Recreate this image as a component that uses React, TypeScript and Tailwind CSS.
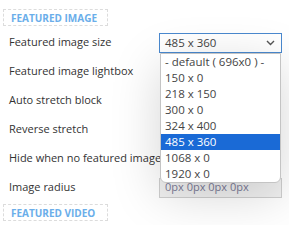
import React from "react";

const options = [
  "- default ( 696x0 ) -",
  "150 x 0",
  "218 x 150",
  "300 x 0",
  "324 x 400",
  "485 x 360",
  "1068 x 0",
  "1920 x 0",
];

const labels = [
  "Featured image size",
  "Featured image lightbox",
  "Auto stretch block",
  "Reverse stretch",
  "Hide when no featured image",
  "Image radius",
];

function Header({ text }: { text: string }) {
  return (
    <div className="ml-[3px] w-[105px] h-[17px] border border-dashed border-[#dcdcdc] flex items-center pl-[7px]">
      <span className="text-[10px] font-bold text-[#6aaeea] leading-none">{text}</span>
    </div>
  );
}

export default function App() {
  return (
    <div
      className="relative w-[289px] h-[225px] overflow-hidden bg-white"
      style={{ fontFamily: '"Open Sans", "Liberation Sans", sans-serif' }}
    >
      <div className="pt-[9px] flex flex-col">
        <Header text="FEATURED IMAGE" />
        <div className="flex flex-col mt-[2px]">
          {labels.map((l, i) => (
            <div key={l} className="h-[29px] flex items-center pl-[9px]">
              <span className="w-[150px] text-[11px] text-[#333] whitespace-nowrap">{l}</span>
              {i === 0 && (
                <div className="w-[123px] h-[20px] border border-[#4a89cf] bg-white flex items-center justify-between pl-[5px] pr-[6px]">
                  <span className="text-[11.5px] text-[#444]">485 x 360</span>
                  <svg width="9" height="6" viewBox="0 0 9 6">
                    <path d="M1 1 L4.5 4.5 L8 1" fill="none" stroke="#555" strokeWidth="1.4" />
                  </svg>
                </div>
              )}
              {i === 5 && (
                <div className="w-[123px] h-[20px] border border-[#cfcfcf] bg-[#f1f1f1] flex items-center pl-[5px]">
                  <span className="text-[11px] text-[#7c7c98]">0px 0px 0px 0px</span>
                </div>
              )}
            </div>
          ))}
        </div>
        <div className="mt-[2px]">
          <Header text="FEATURED VIDEO" />
        </div>
      </div>

      <div className="absolute left-[160px] top-[53px] w-[121px] bg-white border border-[#c4c4c4] rounded-b-[6px] shadow-[0_12px_50px_rgba(0,0,0,0.17)] overflow-hidden">
        {options.map((o) => (
          <div
            key={o}
            className={
              "h-[16px] flex items-center pl-[4px] text-[11.5px] whitespace-nowrap " +
              (o === "485 x 360" ? "bg-[#1a6ad6] text-white" : "text-[#444]")
            }
          >
            {o}
          </div>
        ))}
      </div>
    </div>
  );
}
